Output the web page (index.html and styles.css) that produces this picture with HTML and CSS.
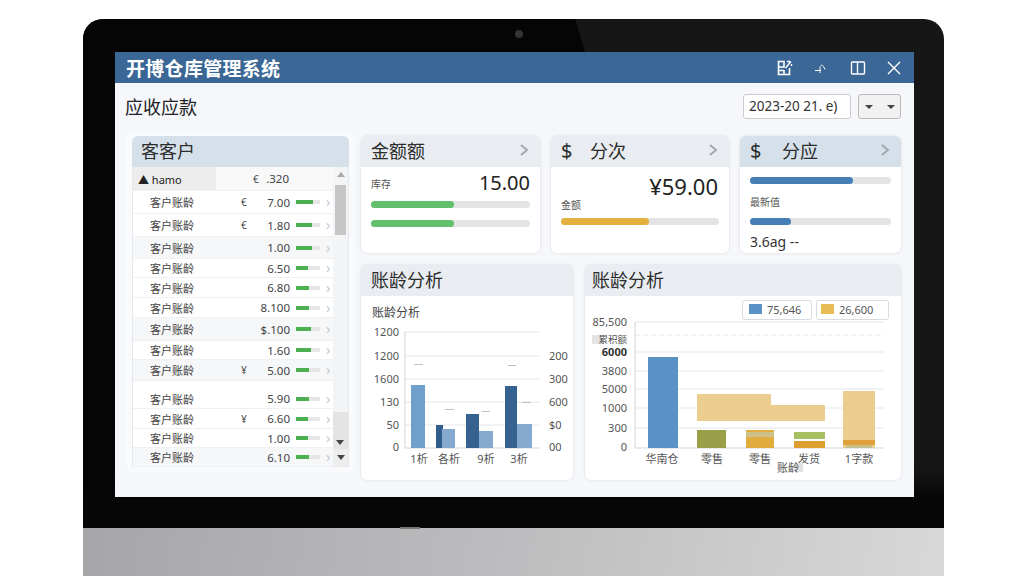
FILE: index.html
```html
<!DOCTYPE html>
<html lang="zh-CN">
<head>
  <meta charset="UTF-8" />
  <meta name="viewport" content="width=device-width, initial-scale=1.0"/>
  <title>开博仓库管理系统</title>
  <link rel="stylesheet" href="styles.css">
</head>
<body>
  <div class="laptop">
    <div class="bezel">
      <div class="glare"></div>
      <div class="camera"></div>
      <div class="screen">
        <div class="titlebar">
          <h1>开博仓库管理系统</h1>
          <div class="win-icons">
            <svg width="18" height="18" viewBox="0 0 18 18" fill="none" stroke="#fff" stroke-width="1.600">
              <path d="M2.500 2.500h5.500v5.500h-5.500zM2.500 8v7.500h11V9M8 11v4.500M2.500 11.500H8"/>
              <path d="M9.500 9l5.500-6.500M11 2.500h3M15.500 5v2" stroke-width="1.400"/>
            </svg>
            <svg width="18" height="18" viewBox="0 0 18 18" fill="none" stroke="#fff" stroke-width="1">
              <path d="M3 11.500h6M8 8v6M8 7.500c2-2.500 3-1.500 5 3"/>
            </svg>
            <svg width="18" height="18" viewBox="0 0 18 18" fill="none" stroke="#fff" stroke-width="1.400">
              <rect x="2.500" y="3" width="13" height="12" rx="1"/>
              <path d="M8.500 3v12"/>
            </svg>
            <svg width="18" height="18" viewBox="0 0 18 18" fill="none" stroke="#fff" stroke-width="1.400">
              <path d="M3 3l12 12M15 3L3 15"/>
            </svg>
          </div>
        </div>

        <div class="toolbar">
          <h2>应收应款</h2>
          <div class="date-input">2023-20 21. e)</div>
          <div class="drop-btn"><i></i><i></i></div>
        </div>

        <div class="board">
          <div class="customers">
            <div class="panel-head blue">客客户</div>
            <div class="list-wrap">
              <div class="list">
                <div class="row top-row"><span class="hamo">▲ hamo</span><span class="cur">€</span><span class="val">.320</span></div>
                <div class="row tall"><span>客户账龄</span><span class="cur">€</span><span class="val">7.00</span><b class="mini"><u style="width:70%"></u></b><em>›</em></div>
                <div class="row tall"><span>客户账龄</span><span class="cur">€</span><span class="val">1.80</span><b class="mini"><u style="width:65%"></u></b><em>›</em></div>
                <div class="row mid shade"><span>客户账龄</span><span class="cur"></span><span class="val">1.00</span><b class="mini"><u style="width:65%"></u></b><em>›</em></div>
                <div class="row low"><span>客户账龄</span><span class="cur"></span><span class="val">6.50</span><b class="mini"><u style="width:50%"></u></b><em>›</em></div>
                <div class="row"><span>客户账龄</span><span class="cur"></span><span class="val">6.80</span><b class="mini"><u style="width:55%"></u></b><em>›</em></div>
                <div class="row"><span>客户账龄</span><span class="cur"></span><span class="val">8.100</span><b class="mini"><u style="width:55%"></u></b><em>›</em></div>
                <div class="row tall shade"><span>客户账龄</span><span class="cur"></span><span class="val">$.100</span><b class="mini"><u style="width:62%"></u></b><em>›</em></div>
                <div class="row low"><span>客户账龄</span><span class="cur"></span><span class="val">1.60</span><b class="mini"><u style="width:62%"></u></b><em>›</em></div>
                <div class="row wide shade"><span>客户账龄</span><span class="cur">¥</span><span class="val">5.00</span><b class="mini"><u style="width:55%"></u></b><em>›</em></div>
                <div class="row-gap"></div>
                <div class="row"><span>客户账龄</span><span class="cur"></span><span class="val">5.90</span><b class="mini"><u style="width:55%"></u></b><em>›</em></div>
                <div class="row"><span>客户账龄</span><span class="cur">¥</span><span class="val">6.60</span><b class="mini"><u style="width:52%"></u></b><em>›</em></div>
                <div class="row low"><span>客户账龄</span><span class="cur"></span><span class="val">1.00</span><b class="mini"><u style="width:50%"></u></b><em>›</em></div>
                <div class="row low shade"><span>客户账龄</span><span class="cur"></span><span class="val">6.10</span><b class="mini"><u style="width:55%"></u></b><em>›</em></div>
              </div>
              <div class="scrollbar">
                <div class="arrow-up"></div>
                <div class="thumb"></div>
                <div class="thumb-low"><div class="arrow-down"></div></div>
                <div class="arrow-cell"><div class="arrow-down"></div></div>
              </div>
            </div>
          </div>

          <div class="right-side">
            <div class="stat-row">
              <div class="card">
                <div class="panel-head">金额额<svg class="chev" width="10" height="14" viewBox="0 0 10 14"><path d="M2 2l6 5-6 5"/></svg></div>
                <div class="card-body one">
                  <div class="split"><span class="small">库存</span><span class="amount">15.00</span></div>
                  <div class="track first"><div class="fill green" style="width:52%"></div></div>
                  <div class="track"><div class="fill green" style="width:52%"></div></div>
                </div>
              </div>
              <div class="card">
                <div class="panel-head"><span class="dollar">$</span>分次<svg class="chev" width="10" height="14" viewBox="0 0 10 14"><path d="M2 2l6 5-6 5"/></svg></div>
                <div class="card-body two">
                  <div class="amount right">¥59.00</div>
                  <div class="small">金额</div>
                  <div class="track"><div class="fill amber" style="width:56%"></div></div>
                </div>
              </div>
              <div class="card">
                <div class="panel-head blue"><span class="dollar far">$</span>分应<svg class="chev" width="10" height="14" viewBox="0 0 10 14"><path d="M2 2l6 5-6 5"/></svg></div>
                <div class="card-body three">
                  <div class="track"><div class="fill blue-fill" style="width:73%"></div></div>
                  <div class="small">最新值</div>
                  <div class="track"><div class="fill blue-fill" style="width:29%"></div></div>
                  <div class="note">3.6ag --</div>
                </div>
              </div>
            </div>

            <div class="chart-row">
              <div class="card">
                <div class="panel-head">账龄分析</div>
                <svg class="chart" width="212" height="184" viewBox="361 296 212 184">
                  <text class="sub" x="372" y="317">账龄分析</text>
                  <g class="grid">
                    <path d="M405 332H540M405 356H540M405 379H540M405 402H540M405 425H540"/>
                    <path class="axis" d="M405 332V448M405 448H540"/>
                  </g>
                  <g class="tick" text-anchor="end">
                    <text x="399" y="336">1200</text>
                    <text x="399" y="360">1200</text>
                    <text x="399" y="383">1600</text>
                    <text x="399" y="406">130</text>
                    <text x="399" y="429">50</text>
                    <text x="399" y="451">0</text>
                  </g>
                  <g class="tick">
                    <text x="549" y="360">200</text>
                    <text x="549" y="383">300</text>
                    <text x="549" y="406">600</text>
                    <text x="549" y="429">$0</text>
                    <text x="549" y="451">00</text>
                  </g>
                  <rect x="411" y="385" width="14" height="63" fill="#6f9fcb"/>
                  <rect x="436" y="425" width="7" height="23" fill="#2f5d8c"/>
                  <rect x="442" y="429" width="13" height="19" fill="#86a9cf"/>
                  <rect x="466" y="414" width="13" height="34" fill="#35628f"/>
                  <rect x="479" y="431" width="14" height="17" fill="#86a9cf"/>
                  <rect x="505" y="386" width="12" height="62" fill="#35628f"/>
                  <rect x="517" y="424" width="15" height="24" fill="#86a9cf"/>
                  <path class="dash" d="M414 364.500h9M445 409.500h9M482 411.500h8M508 365.500h8M522 402.500h9"/>
                  <g class="tick small-tick" text-anchor="middle">
                    <text x="419" y="463">1析</text>
                    <text x="449" y="463">各析</text>
                    <text x="486" y="463">9析</text>
                    <text x="519" y="463">3析</text>
                  </g>
                </svg>
              </div>
              <div class="card">
                <div class="panel-head shift">账龄分析</div>
                <svg class="chart" width="316" height="184" viewBox="585 296 316 184">
                  <rect class="legend" x="742.500" y="300.500" width="69" height="19" rx="2"/>
                  <rect x="749" y="304" width="13" height="10" fill="#5b92c6"/>
                  <text class="tick" x="767" y="314">75,646</text>
                  <rect class="legend" x="816.500" y="300.500" width="72" height="19" rx="2"/>
                  <rect x="821" y="304" width="13" height="10" fill="#e9bd55"/>
                  <text class="tick" x="839" y="314">26,600</text>

                  <g class="grid">
                    <path d="M635 322H884M635 352H884M635 371H884M635 389H884M635 408H884M635 428H884"/>
                    <path d="M635 335H884" stroke-dasharray="5 3"/>
                    <path class="axis" d="M635 322V448M635 448H884"/>
                  </g>
                  <rect x="592" y="335" width="10" height="9" fill="#e4e4e4"/>
                  <g class="tick" text-anchor="end">
                    <text x="627" y="326">85,500</text>
                    <text class="tiny" x="627" y="343">累积额</text>
                    <text class="strong" x="627" y="356">6000</text>
                    <text x="627" y="375">3800</text>
                    <text x="627" y="393">5000</text>
                    <text x="627" y="412">1000</text>
                    <text x="627" y="432">300</text>
                    <text x="627" y="451">0</text>
                  </g>
                  <rect x="648" y="357" width="30" height="91" fill="#5b92c6"/>
                  <path d="M697 394H771V405H825V421H697Z" fill="#eccd90"/>
                  <rect x="697" y="430" width="29" height="18" fill="#9aa04a"/>
                  <rect x="746" y="430" width="28" height="18" fill="#e2ad3f"/>
                  <rect x="746" y="432" width="28" height="5" fill="#cfc08a"/>
                  <rect x="794" y="432" width="31" height="7" fill="#a5bf62"/>
                  <rect x="794" y="441" width="31" height="7" fill="#dd9f2f"/>
                  <rect x="843" y="391" width="32" height="57" fill="#eccd90"/>
                  <rect x="843" y="440" width="32" height="5" fill="#e0a03a"/>
                  <rect x="846" y="445" width="26" height="3" fill="#c5c088"/>
                  <g class="tick" text-anchor="middle">
                    <text x="662" y="463">华南仓</text>
                    <text x="712" y="463">零售</text>
                    <text x="760" y="463">零售</text>
                    <text x="809" y="463">发货</text>
                    <text x="859" y="463">1字款</text>
                  </g>
                  <rect x="795" y="463" width="8" height="9" fill="#e2e2e2"/>
                  <text class="tick" x="777" y="472">账龄</text>
                </svg>
              </div>
            </div>
          </div>
        </div>
      </div>
    </div>
    <div class="base"><div class="notch"></div></div>
  </div>
</body>
</html>
```

FILE: styles.css
```css
body {
  margin: 0;
  background-color: white;
  font-family: "Noto Sans", "Noto Sans CJK SC", sans-serif;
  color: #333;
  overflow: hidden;
}

.laptop {
  width: 861px;
  margin: 19px 0 0 83px;
}

.bezel {
  position: relative;
  height: 509px;
  box-sizing: border-box;
  padding: 33px 30px 31px 32px;
  background-color: #161616;
  border-radius: 20px 20px 0 0;
}

/* darker reflection on the left of the glass */
.glare {
  position: absolute;
  top: 0;
  left: 0;
  bottom: 0;
  width: 502px;
  background-color: #050505;
  border-radius: 20px 0 0 0;
  clip-path: polygon(0 0, 492px 0, 502px 33px, 502px 100%, 0 100%);
}

.bezel::after {
  content: "";
  position: absolute;
  left: 0;
  right: 0;
  bottom: 0;
  height: 60px;
  background: linear-gradient(to bottom, transparent, #060606 50%);
}

.camera {
  position: absolute;
  top: 11px;
  left: 432px;
  width: 8px;
  height: 8px;
  border-radius: 50%;
  background-color: #333;
}

.screen {
  position: relative;
  z-index: 1;
  width: 799px;
  height: 445px;
  background-color: #f5f7fa;
}

.titlebar {
  display: flex;
  align-items: center;
  justify-content: space-between;
  height: 31px;
  padding: 0 11px;
  background-color: #3a6795;
}

h1 {
  margin: 0;
  font-size: 19px;
  font-weight: 700;
  letter-spacing: 0.3px;
  color: white;
}

.win-icons {
  display: flex;
  gap: 18.500px;
}

.toolbar {
  display: flex;
  align-items: center;
  gap: 7px;
  height: 47px;
  padding: 0 13px 0 10px;
}

h2 {
  flex: 1;
  margin: 0 0 2px;
  font-size: 18px;
  font-weight: 400;
  color: #222;
}

.date-input {
  width: 108px;
  height: 25px;
  box-sizing: border-box;
  padding-left: 5px;
  line-height: 23px;
  font-size: 13.500px;
  background-color: white;
  border: 1px solid #ccc;
  border-radius: 3px;
}

.drop-btn {
  display: flex;
  align-items: center;
  justify-content: center;
  gap: 14px;
  width: 43px;
  height: 25px;
  box-sizing: border-box;
  background-color: #f1f1f1;
  border: 1px solid #bbb;
  border-radius: 3px;
}

.drop-btn i {
  border: 4px solid transparent;
  border-top: 4px solid #444;
  border-bottom: 0;
}

.board {
  display: flex;
  gap: 12px;
  padding: 6px 13px 0 17px;
}

.customers {
  width: 217px;
  height: 331px;
  box-shadow: 0 0 0 6px #f9fafc;
  border-radius: 4px;
}

.panel-head {
  display: flex;
  align-items: center;
  height: 31px;
  box-sizing: border-box;
  padding: 0 10px 3px;
  font-size: 18px;
  color: #2c2c2c;
  background-color: #e9edf1;
  border-radius: 6px 6px 0 0;
}

.panel-head.blue {
  background-color: #d6e0eb;
}

.panel-head.shift {
  padding-left: 7px;
}

.customers .panel-head {
  padding-left: 9px;
}

.chev {
  margin-left: auto;
  margin-right: 1px;
  fill: none;
  stroke: #a4a8ad;
  stroke-width: 2;
}

.dollar {
  width: 29px;
  font-size: 20px;
}

.dollar.far {
  width: 32px;
}

.list-wrap {
  display: flex;
  height: 300px;
  background-color: white;
  border: 1px solid #e6e8eb;
  border-top: 0;
  box-sizing: border-box;
}

.list {
  flex: 1;
  min-width: 0;
}

.row {
  display: grid;
  grid-template-columns: 91px 10px 39px 24px 12px;
  align-items: center;
  height: 20px;
  padding-left: 17px;
  font-size: 11px;
  color: #444;
  border-bottom: 1px solid #f0f1f3;
  box-sizing: border-box;
}

.row.tall {
  height: 23px;
}

.row.mid {
  height: 22px;
}

.row.wide {
  height: 21px;
}

.row.low {
  height: 19px;
}

.row.shade {
  background-color: #f6f7f9;
}

.row-gap {
  height: 8px;
}

.top-row {
  height: 24px;
  padding-left: 0;
  grid-template-columns: 120px 10px 26px;
  font-size: 12px;
  background: linear-gradient(to right, #ececec 83px, #f8f8f8 83px);
}

.hamo {
  padding-left: 5px;
  font-size: 11px;
  color: #222;
}

.cur {
  font-size: 10px;
}

.val {
  text-align: right;
  font-size: 11.500px;
}

.mini {
  display: block;
  width: 24px;
  height: 4px;
  margin-left: 6px;
  background-color: #e6e6e6;
}

.mini u {
  display: block;
  height: 100%;
  background-color: #4caf50;
}

.row em {
  margin-left: 12px;
  font-style: normal;
  font-size: 14px;
  line-height: 14px;
  color: #c8c8c8;
}

.scrollbar {
  position: relative;
  width: 15px;
  flex: none;
  background-color: #f3f4f6;
}

.arrow-up {
  width: 0;
  margin: 5px auto 8px;
  border: 4px solid transparent;
  border-bottom: 5px solid #aaa;
  border-top: 0;
}

.thumb {
  width: 11px;
  height: 50px;
  margin: 4px auto 0;
  background-color: #c6c6c6;
}

.thumb-low {
  position: absolute;
  left: 0;
  right: 0;
  top: 245px;
  height: 37px;
  background-color: #e4e4e4;
}

.thumb-low .arrow-down {
  position: absolute;
  left: 3px;
  bottom: 4px;
}

.arrow-cell {
  position: absolute;
  left: 0;
  right: 0;
  bottom: 0;
  height: 17px;
  background-color: #eeeeee;
}

.arrow-cell .arrow-down {
  margin: 6px auto 0;
}

.arrow-down {
  width: 0;
  border: 4px solid transparent;
  border-top: 5px solid #444;
  border-bottom: 0;
}

.right-side {
  display: flex;
  flex-direction: column;
  gap: 12px;
  width: 540px;
}

.stat-row {
  display: grid;
  grid-template-columns: 179px 178px 161px;
  gap: 11px;
}

.chart-row {
  display: grid;
  grid-template-columns: 212px 316px;
  gap: 12px;
}

.card {
  background-color: white;
  border-radius: 6px;
  box-shadow: 0 0 3px rgba(0, 0, 0, 0.12);
}

.card-body {
  height: 86px;
  padding: 0 10px;
}

.split {
  display: flex;
  align-items: center;
  justify-content: space-between;
  height: 32px;
}

.small {
  font-size: 10px;
  color: #555;
}

.amount {
  font-size: 20px;
  line-height: 30px;
  color: #222;
}

.amount.right {
  text-align: right;
  padding: 4px 1px 0 0;
  font-size: 22px;
}

.track {
  height: 7px;
  margin-top: 12px;
  background-color: #e3e4e6;
  border-radius: 4px;
}

.track.first {
  margin-top: 2px;
}

.fill {
  height: 100%;
  border-radius: 4px;
}

.green {
  background-color: #62c06c;
}

.amber {
  background-color: #e5b13e;
}

.blue-fill {
  background-color: #467fb5;
}

.two .small {
  margin-top: -4px;
  line-height: 16px;
}

.two .track {
  margin-top: 5px;
}

.three .track:first-child {
  margin-top: 0;
  position: relative;
  top: 10px;
}

.three .small {
  margin-top: 21px;
  line-height: 14px;
}

.three .small + .track {
  margin-top: 9px;
}

.note {
  margin-top: 8px;
  font-size: 14px;
  line-height: 18px;
}

.chart {
  display: block;
}

.chart .tick text,
.chart text.tick {
  font-size: 11px;
  fill: #555;
}

.chart .tick text.tiny {
  font-size: 9.500px;
}

.chart .tick text.strong {
  font-weight: 700;
  fill: #333;
}

.chart .sub {
  font-size: 12px;
  fill: #444;
}

.grid path {
  fill: none;
  stroke: #e4e6e8;
  stroke-width: 1;
}

.grid path.axis {
  stroke: #d0d3d6;
}

.dash {
  fill: none;
  stroke: #c0c0c0;
}

.legend {
  fill: white;
  stroke: #d8dbdf;
}

.base {
  position: relative;
  z-index: 1;
  height: 48px;
  background: linear-gradient(100deg, #a6a6a8, #bdbdbf 50%, #d8d8d8);
}

.notch {
  position: absolute;
  top: -1px;
  left: 317px;
  width: 20px;
  height: 2px;
  background-color: #777;
}
```
